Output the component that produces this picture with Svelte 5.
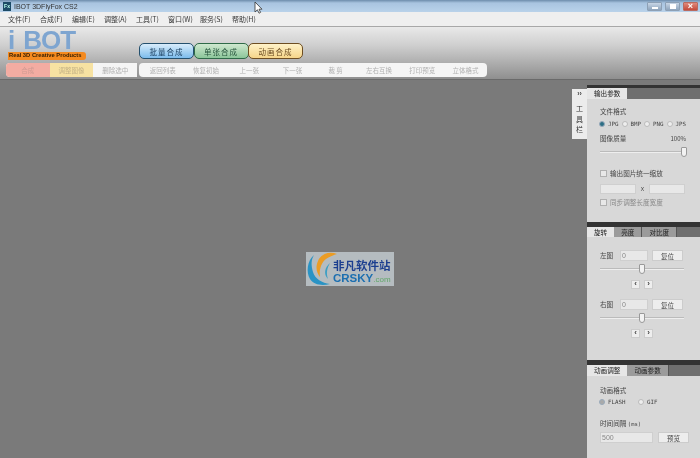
<script>
  const menus = ['文件(F)','合成(F)','编辑(E)','调整(A)','工具(T)','窗口(W)','服务(S)','帮助(H)'];
  const tools = ['返回列表','恢复初始','上一张','下一张','裁 剪','左右互换','打印预览','立体格式'];
  const formats = ['JPG','BMP','PNG','JPS'];
</script>

<div class="app">
  <header class="title">
    <span class="fx">Fx</span>
    <span class="title-text">IBOT 3DFlyFox CS2</span>
    <svg class="cursor" width="9" height="13" viewBox="0 0 9 13"><path d="M1 1v10l2.4-2.2 1.6 3.4 1.6-.8-1.6-3.2H8z" fill="#fff" stroke="#333" stroke-width=".8"/></svg>
    <div class="winbtns">
      <span class="wb"><i class="min"></i></span>
      <span class="wb"><i class="max"></i></span>
      <span class="wb close">×</span>
    </div>
  </header>

  <nav class="menu">
    {#each menus as m}<span>{m}</span>{/each}
  </nav>

  <section class="head">
    <div class="logo">
      <div class="logo-word"><span>i</span><span>BOT</span></div>
      <div class="logo-tag">Real 3D Creative Products</div>
    </div>
    <div class="head-right">
      <div class="modes">
        <span class="mode blue">批量合成</span>
        <span class="mode green">单张合成</span>
        <span class="mode yellow">动画合成</span>
      </div>
    </div>
    <div class="bar left">
      <span class="b red">合成</span>
      <span class="b amber">调整图像</span>
      <span class="b">删除选中</span>
    </div>
    <div class="bar right">
      {#each tools as t}<span class="b">{t}</span>{/each}
    </div>
  </section>

  <main class="main">
    <div class="canvas"></div>

    <div class="wm">
      <svg class="wm-icon" width="27" height="34" viewBox="0 0 27 34">
        <path d="M8 3C1 9 0 20 4 27c4 6 12 7 20 5-8-1-15-5-17-12C5 13 5 8 8 3z" fill="#2a93c4"/>
        <path d="M31 2C23-1 15 2 12 9c-3 7-1 12 2 16-1-7 1-14 6-18 3-2 7-4 11-5z" fill="#eb9c24"/>
        <path d="M24 11c-5 4-7 11-2 16-2-6-1-11 2-16z" fill="#3d9fc4"/>
      </svg>
      <div class="wm-text">
        <div class="wm-cn">非凡软件站</div>
        <div class="wm-en">CRSKY<small>.com</small></div>
      </div>
    </div>

    <aside class="toolstab">
      <span class="arrows">››</span>
      <span>工</span><span>具</span><span>栏</span>
    </aside>

    <div class="side">
      <section class="panel p1">
        <div class="strip"></div>
        <div class="tabs"><span class="tab on">输出参数</span></div>
        <div class="body">
          <div class="label">文件格式</div>
          <div class="radios">
            {#each formats as f, i}
              <span class="radio"><i class:sel={i === 0}></i>{f}</span>
            {/each}
          </div>
          <div class="qual"><span class="label">图像质量</span><span class="pct">100%</span></div>
          <div class="slider s-end"><i></i></div>
          <div class="check"><i></i>输出图片统一缩放</div>
          <div class="size"><span class="inp"></span><span class="x">X</span><span class="inp"></span></div>
          <div class="check small"><i class="tick"></i>同步调整长度宽度</div>
        </div>
      </section>

      <section class="panel p2">
        <div class="strip"></div>
        <div class="tabs"><span class="tab on">旋转</span><span class="tab">亮度</span><span class="tab">对比度</span></div>
        <div class="body">
          {#each ['左图','右图'] as name}
            <div class="rot">
              <div class="rot-row"><span class="label">{name}</span><span class="inp num">0</span><span class="btn">复位</span></div>
              <div class="slider s-mid"><i></i></div>
              <div class="steps"><span class="step">‹</span><span class="step">›</span></div>
            </div>
          {/each}
        </div>
      </section>

      <section class="panel p3">
        <div class="strip"></div>
        <div class="tabs"><span class="tab on">动画调整</span><span class="tab">动画参数</span></div>
        <div class="body">
          <div class="label">动画格式</div>
          <div class="radios anim">
            <span class="radio"><i class="sel dim"></i>FLASH</span>
            <span class="radio"><i></i>GIF</span>
          </div>
          <div class="label gap">时间间隔 <span class="mono">(ms)</span></div>
          <div class="time"><span class="inp num wide">500</span><span class="btn">预览</span></div>
        </div>
      </section>
    </div>
  </main>
</div>

<style>
  :global(body) { margin: 0; background: #7a7a7a; }
  .app {
    width: 700px; height: 458px; overflow: hidden; display: flex; flex-direction: column;
    font-family: "Noto Sans CJK SC", "Liberation Sans", sans-serif; font-size: 7px; color: #333;
    filter: blur(0.4px);
  }
  .title {
    height: 12px; flex: none; display: flex; align-items: center; gap: 3px; padding-left: 3px; position: relative;
    background: linear-gradient(#6d8cab, #a9c4e0 25%, #b9d2ea);
  }
  .fx { width: 8px; height: 9px; background: #1c4a66; color: #bfe; font: bold 5px/9px "Liberation Sans", sans-serif; text-align: center; }
  .title-text { font: 7px "Liberation Sans", sans-serif; color: #333; }
  .cursor { position: absolute; left: 254px; top: 1px; }
  .winbtns { margin-left: auto; margin-right: 2px; display: flex; gap: 3px; align-self: flex-start; padding-top: 2px; }
  .wb { width: 15px; height: 9px; background: linear-gradient(#c8d6e6, #8ea4bc); border: 1px solid #8da0b5; box-sizing: border-box; border-radius: 1px; display: flex; align-items: center; justify-content: center; }
  .wb i { display: block; background: #fff; }
  .wb .min { width: 6px; height: 2px; margin-top: 2px; }
  .wb .max { width: 6px; height: 5px; }
  .wb.close { background: linear-gradient(#e08a7c, #c4493a); color: #fff; font: bold 9px/7px "Liberation Sans", sans-serif; border-color: #b96a60; }

  .menu {
    height: 14px; flex: none; background: #efefef; display: flex; padding-left: 8px; align-items: center;
    font-size: 7px; border-bottom: 1px solid #a8a8a8; color: #3a3a3a;
  }
  .menu span { width: 32px; flex: none; white-space: nowrap; }

  .head {
    flex: none; background: linear-gradient(#e9e9e9, #cfcfcf 35%, #8f8f8f);
    display: grid; grid-template-columns: 137px 1fr; grid-template-rows: 36px 14px; border-bottom: 1px solid #6a6a6a;
    box-sizing: border-box; height: 53px;
  }
  .logo { padding-left: 8px; }
  .logo-word { display: flex; gap: 9px; font: bold 26px/20px "Liberation Sans", sans-serif; color: #7ea5d0; letter-spacing: -1px; height: 22px; padding-top: 3px; }
  .logo-tag { background: #f58a1f; color: #3a2000; font: bold 5.8px/7px "Liberation Sans", sans-serif; width: 78px; height: 8px; border-radius: 0 3px 3px 0; padding-left: 1px; box-sizing: border-box; }
  .head-right { display: flex; align-items: flex-end; padding-bottom: 4px; padding-left: 2px; }
  .modes { display: flex; }
  .mode { width: 55px; height: 16px; box-sizing: border-box; border-radius: 5px; border: 1px solid; display: flex; align-items: center; justify-content: center; font-size: 7.5px; letter-spacing: 1px; margin-right: -.5px; }
  .blue { background: linear-gradient(#d8ecfb, #7cbcec); border-color: #24506e; color: #1b3f60; }
  .green { background: linear-gradient(#cfe8cf, #8cc69a); border-color: #2f6a48; color: #24523a; }
  .yellow { background: linear-gradient(#fff2c8, #f6d58a); border-color: #6e4e22; color: #6a4a20; }
  .bar { height: 14px; background: #f5f5f5; display: flex; align-items: center; color: #b0b0b0; font-size: 6.5px; }
  .bar .b { display: flex; align-items: center; justify-content: center; height: 100%; flex: 1; }
  .bar.left { margin-left: 6px; width: 131px; border-radius: 4px 0 0 4px; overflow: hidden; }
  .bar.left .red { background: #f3aca2; color: #cf9a92; }
  .bar.left .amber { background: #f7e2a2; color: #c4b285; }
  .bar.right { margin-left: 2px; width: 348px; border-radius: 4px; padding-left: 2px; box-sizing: border-box; }

  .main { flex: 1; min-height: 0; display: flex; position: relative; background: #7a7a7a; }
  .canvas { flex: 1; }
  .wm { position: absolute; left: 306px; top: 172px; width: 88px; height: 34px; background: #b5bcc0; display: flex; align-items: flex-start; }
  .wm-icon { overflow: visible; flex: none; }
  .wm-text { display: flex; flex-direction: column; padding-top: 6px; }
  .wm-cn { color: #1c3f8f; font-size: 11.5px; font-weight: 700; line-height: 14px; }
  .wm-en { color: #1c6fb0; font: bold 11.5px/11px "Liberation Sans", sans-serif; margin-top: 1px; }
  .wm-en small { color: #62a86a; font-size: 8px; font-weight: 400; }

  .toolstab { position: absolute; left: 572px; top: 9px; width: 15px; height: 50px; background: #ececec; display: flex; flex-direction: column; align-items: center; font-size: 7px; line-height: 10.5px; padding-top: 1px; box-sizing: border-box; }
  .arrows { font: bold 7px/7px "Liberation Sans", sans-serif; color: #444; margin-bottom: 6px; }

  .side { width: 113px; flex: none; display: flex; flex-direction: column; padding-top: 5px; }
  .panel { background: #d8d8d8; display: flex; flex-direction: column; overflow: hidden; }
  .p1 { height: 137px; flex: none; }
  .p2 { height: 138px; flex: none; }
  .p3 { flex: 1; }
  .strip { height: 3px; background: #333; flex: none; }
  .p2 .strip, .p3 .strip { height: 5px; }
  .tabs { display: flex; height: 11px; background: #6f6f6f; flex: none; }
  .p2 .tabs { height: 10px; }
  .tab { padding: 0 7px; background: #9b9b9b; font-size: 6.6px; line-height: 10px; color: #222; border-right: 1px solid #555; white-space: nowrap; }
  .tab.on { background: #e6e6e6; border-right: 0; }
  .body { padding: 7px 0 0 13px; flex: 1; color: #444; }
  .label { font-size: 6.6px; line-height: 11px; white-space: nowrap; }
  .radios { display: grid; grid-template-columns: repeat(4, 22.5px); margin: 2px 0 0 -1px; font: 5.8px/10px "DejaVu Sans Mono", monospace; }
  .radio { display: flex; align-items: center; gap: 3px; }
  .radio i { width: 6px; height: 6px; border-radius: 50%; background: #eee; border: 1px solid #bbb; box-sizing: border-box; }
  .radio i.sel { background: #2d6f85; border-color: #9ab; }
  .radio i.dim { background: #aaa; }
  .qual { display: flex; justify-content: space-between; width: 86px; margin-top: 4px; }
  .pct { font-size: 6px; line-height: 11px; }
  .slider { height: 12px; width: 86px; position: relative; margin-top: 1.5px; }
  .slider::before { content: ''; position: absolute; left: 0; right: 0; top: 5px; height: 2px; background: #eee; border-top: 1px solid #bbb; box-sizing: border-box; }
  .slider i { position: absolute; top: 1px; width: 6px; height: 10px; background: #f2f2f2; border: 1px solid #999; box-sizing: border-box; border-radius: 1px 1px 3px 3px; }
  .s-end i { right: -1px; }
  .s-mid i { left: 39px; }
  .check { display: flex; align-items: center; gap: 3px; margin-top: 10.5px; font-size: 6.6px; line-height: 11px; }
  .check i { width: 7px; height: 7px; background: #e8e8e8; border: 1px solid #b0b0b0; box-sizing: border-box; }
  .check.small { margin-top: 3.5px; color: #888; }
  .size { display: flex; align-items: center; margin-top: 4.5px; }
  .size .inp { width: 36px; height: 10px; }
  .x { width: 13px; text-align: center; font: 5.5px "DejaVu Sans Mono", monospace; }

  .p2 .body { padding: 13px 0 0 13px; }
  .rot { margin-bottom: 10px; }
  .rot-row { display: flex; align-items: center; height: 11px; }
  .rot-row .label { width: 20px; flex: none; }
  .inp { background: #e8e8e8; border: 1px solid #cfcfcf; box-sizing: border-box; color: #888; flex: none; }
  .inp.num { width: 28px; height: 11px; font: 7px/9px "Liberation Sans", sans-serif; padding-left: 1px; }
  .btn { width: 31px; height: 11px; background: #ededed; border: 1px solid #ccc; box-sizing: border-box; display: flex; align-items: center; justify-content: center; font-size: 6.6px; flex: none; }
  .rot-row .btn { margin-left: 4px; }
  .s-mid { width: 84px; margin-top: 2px; }
  .steps { display: flex; justify-content: center; gap: 4px; width: 84px; margin-top: 5px; }
  .step { width: 9px; height: 9px; background: #eee; border: 1px solid #ccc; box-sizing: border-box; font: bold 8px/6px "Liberation Sans", sans-serif; text-align: center; }

  .p3 .body { padding: 8.5px 0 0 13px; }
  .anim { grid-template-columns: 39px 20px; margin-top: 1.5px; }
  .gap { margin-top: 10.5px; }
  .mono { font: 5.5px "DejaVu Sans Mono", monospace; }
  .time { display: flex; gap: 5px; margin-top: 3.5px; align-items: center; }
  .inp.num.wide { width: 53px; height: 11px; }
</style>
